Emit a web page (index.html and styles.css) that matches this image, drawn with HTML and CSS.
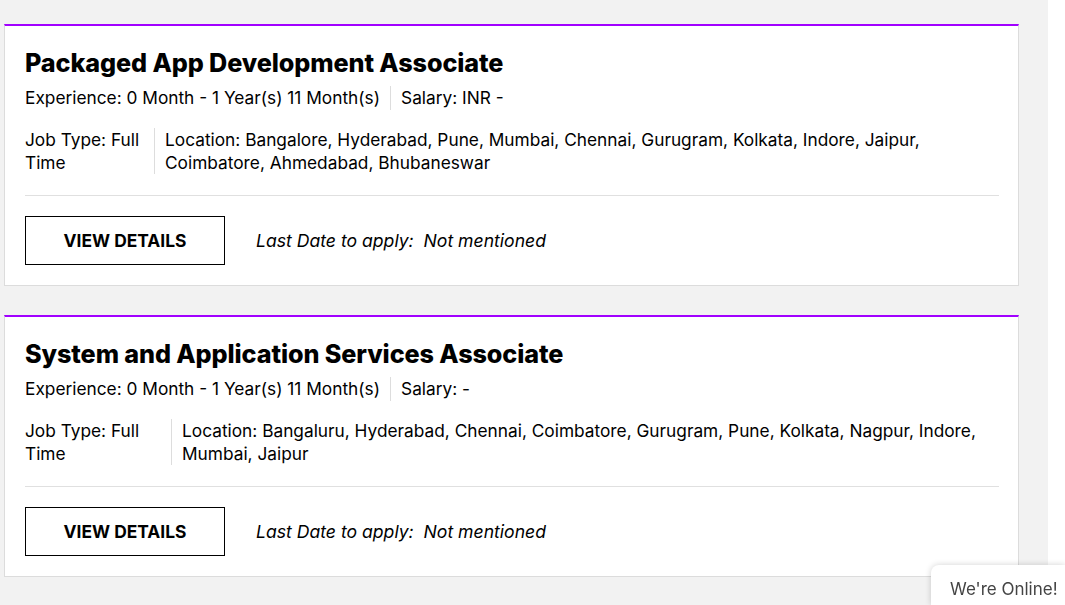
FILE: index.html
```html
<!DOCTYPE html>
<html>
<head>
<meta charset="utf-8">
<link rel="stylesheet" href="styles.css">
</head>
<body>
<div class="page">
  <main class="list">
    <section class="card">
      <h2 class="title">Packaged App Development Associate</h2>
      <div class="meta">
        <span class="meta-item">Experience: 0 Month - 1 Year(s) 11 Month(s)</span>
        <span class="meta-item">Salary: INR -</span>
      </div>
      <div class="info">
        <div class="jobtype jobtype-a">Job Type: Full Time</div>
        <div class="location">Location: Bangalore, Hyderabad, Pune, Mumbai, Chennai, Gurugram, Kolkata, Indore, Jaipur, Coimbatore, Ahmedabad, Bhubaneswar</div>
      </div>
      <div class="actions">
        <button class="btn">VIEW DETAILS</button>
        <span class="lastdate">Last Date to apply:&nbsp; Not mentioned</span>
      </div>
    </section>
    <section class="card">
      <h2 class="title">System and Application Services Associate</h2>
      <div class="meta">
        <span class="meta-item">Experience: 0 Month - 1 Year(s) 11 Month(s)</span>
        <span class="meta-item">Salary: -</span>
      </div>
      <div class="info">
        <div class="jobtype jobtype-b">Job Type: Full Time</div>
        <div class="location">Location: Bangaluru, Hyderabad, Chennai, Coimbatore, Gurugram, Pune, Kolkata, Nagpur, Indore, Mumbai, Jaipur</div>
      </div>
      <div class="actions">
        <button class="btn">VIEW DETAILS</button>
        <span class="lastdate">Last Date to apply:&nbsp; Not mentioned</span>
      </div>
    </section>
  </main>
  <aside class="strip"></aside>
</div>
<div class="chat">We're Online!</div>
</body>
</html>
```

FILE: styles.css
```css
* { box-sizing: border-box; }
html, body { margin: 0; padding: 0; }
body {
  font-family: Inter, "Noto Sans", sans-serif;
  color: #000;
  background: #f2f2f2;
  overflow: hidden;
  height: 605px;
}
.page {
  display: flex;
  height: 605px;
}
.list {
  width: 1048px;
  padding: 24px 29px 0 4px;
  display: flex;
  flex-direction: column;
  gap: 29px;
  background: #f2f2f2;
}
.strip {
  flex: 1;
  background: #fff;
}
.card {
  background: #fff;
  border: 1px solid #dcdcdc;
  border-top: 2px solid #a100ff;
  padding: 21px 19px 20px 20px;
}
.title {
  margin: 0;
  font-size: 25.2px;
  line-height: 32px;
  font-weight: 800;
  letter-spacing: -0.1px;
}
.meta {
  display: flex;
  align-items: center;
  margin-top: 7px;
  font-size: 17.3px;
  line-height: 24px;
}
.meta-item + .meta-item {
  border-left: 1px solid #ddd;
  margin-left: 10px;
  padding-left: 10px;
}
.info {
  display: flex;
  margin-top: 18px;
  font-size: 17.3px;
  line-height: 23px;
  padding-bottom: 21px;
  border-bottom: 1px solid #e0e0e0;
}
.jobtype {
  flex: none;
  padding-right: 10px;
  border-right: 1px solid #ddd;
}
.jobtype-a { width: 130px; }
.jobtype-b { width: 147px; }
.location {
  flex: 1;
  padding-left: 10px;
}
.actions {
  display: flex;
  align-items: center;
  margin-top: 20px;
  gap: 31px;
}
.btn {
  width: 200px;
  height: 49px;
  background: #fff;
  border: 1px solid #000;
  font-family: Inter, "Noto Sans", sans-serif;
  font-weight: 700;
  font-size: 17.4px;
  color: #000;
  padding: 0;
}
.lastdate {
  font-style: italic;
  font-size: 17.6px;
}
.chat {
  position: fixed;
  right: 0;
  bottom: 0;
  width: 134px;
  height: 40px;
  background: #fff;
  border-radius: 8px 0 0 0;
  box-shadow: 0 0 6px rgba(0,0,0,0.18);
  padding: 14px 0 0 19px;
  font-size: 17px;
  color: #444;
  white-space: nowrap;
}
```
